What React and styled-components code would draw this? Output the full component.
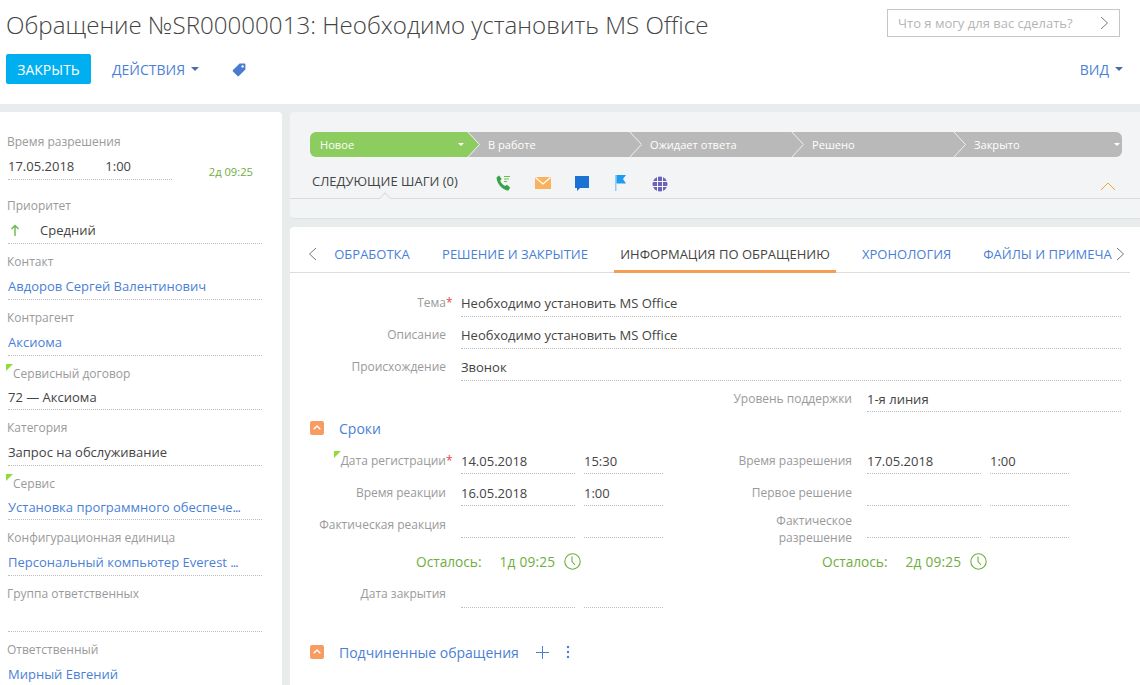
import React from "react";
import styled, { createGlobalStyle } from "styled-components";

const Global = createGlobalStyle`
  html, body { margin: 0; padding: 0; height: 685px; overflow: hidden; background: #e9eced; }
  body { font-family: "Open Sans", "Liberation Sans", sans-serif; font-size: 13px; color: #444; }
  * { box-sizing: border-box; }
`;

const blue = "#4b7fd6";
const dots = "1px dotted #bdbdbd";

const Page = styled.div`
  width: 1140px;
  height: 685px;
  overflow: hidden;
  display: flex;
  flex-direction: column;
`;

const Header = styled.header`
  height: 104px;
  flex: none;
  background: #fff;
  padding: 0 17px 0 6px;
  display: flex;
  flex-direction: column;
`;

const TopRow = styled.div`
  display: flex;
  justify-content: space-between;
  height: 54px;
`;

const Title = styled.h1`
  margin: 7px 0 0;
  font-size: 24.14px;
  line-height: 36px;
  font-weight: 300;
  color: #444;
  white-space: nowrap;
`;

const Ask = styled.div`
  width: 233px;
  height: 28px;
  margin: 9px 3px 0 0;
  border: 1px solid #c6c6c6;
  display: flex;
  align-items: center;
  justify-content: space-between;
  padding: 0 10px;
  font-size: 13px;
  color: #b5b5b5;
`;

const ActionRow = styled.div`
  display: flex;
  align-items: center;
  height: 30px;
`;

const PrimaryButton = styled.button`
  width: 85px;
  height: 30px;
  border: 0;
  border-radius: 2px;
  background: #00aff0;
  color: #fff;
  font: 14px "Open Sans", sans-serif;
`;

const MenuButton = styled.div`
  display: flex;
  align-items: center;
  gap: 6px;
  font-size: 14px;
  color: ${blue};
  margin-left: ${(p) => p.$left || 0}px;
`;

const Caret = styled.span`
  width: 0;
  height: 0;
  border-left: 4px solid transparent;
  border-right: 4px solid transparent;
  border-top: 4px solid #4a6da7;
`;

const TagIcon = styled.svg`
  margin: 1px 0 0 33px;
`;

const Spacer = styled.div`
  flex: 1;
`;

const Body = styled.div`
  flex: 1;
  min-height: 0;
  padding-top: 8px;
  display: flex;
  gap: 8px;
`;

const Side = styled.aside`
  width: 282px;
  flex: none;
  background: #fff;
  border-radius: 0 4px 0 0;
  padding: 20px 20px 0 8px;
`;

const SideField = styled.div`
  position: relative;
  height: ${(p) => p.$h || 56}px;
`;

const SideLabel = styled.div`
  font-size: 12px;
  line-height: 20px;
  margin-left: -1px;
  color: #9a9a9a;
  white-space: nowrap;
  padding-left: ${(p) => (p.$marked ? 6 : 0)}px;
`;

const SideValue = styled.div`
  width: ${(p) => (p.$w ? `${p.$w}px` : "auto")};
  height: ${(p) => (p.$marked ? 26 : 28)}px;
  padding-top: ${(p) => (p.$marked ? 2 : 3)}px;
  line-height: 22px;
  font-size: 13px;
  color: ${(p) => (p.$link ? blue : "#444")};
  border-bottom: ${dots};
  white-space: nowrap;
  overflow: hidden;
  display: flex;
  gap: ${(p) => p.$gap || 0}px;
`;

const Dots = styled.span`
  letter-spacing: -1px;
`;

const Corner = styled.span`
  position: absolute;
  left: ${(p) => p.$left || 0}px;
  top: ${(p) => p.$top || 0}px;
  width: 0;
  height: 0;
  border-top: 7px solid #8fdc3c;
  border-right: 7px solid transparent;
`;

const SideTime = styled.div`
  display: flex;
  align-items: flex-end;
  justify-content: space-between;
`;

const SideRemain = styled.span`
  font-size: 11.2px;
  color: #6eae3e;
  margin: 0 9px 0 0;
  transform: translateY(-1px);
`;

const Main = styled.main`
  flex: 1;
  min-width: 0;
  display: flex;
  flex-direction: column;
  gap: 8px;
`;

const StagePanel = styled.section`
  height: 107px;
  flex: none;
  background: #f3f4f6;
  border-bottom: 1px solid #dfe1e3;
  border-radius: 4px 0 0 4px;
  padding-top: 20px;
`;

const Stages = styled.div`
  display: flex;
  margin: 0 18px 0 20px;
  height: 25px;
  border-radius: 6px;
  overflow: hidden;
`;

const Stage = styled.div`
  position: relative;
  flex: none;
  width: ${(p) => p.$w}px;
  height: 25px;
  line-height: 25px;
  padding-left: ${(p) => p.$pad}px;
  background: ${(p) => (p.$active ? "#8dcc5f" : "#b9b9b9")};
  color: #fff;
  font-size: 11.1px;
  z-index: ${(p) => p.$z};
`;

const StageArrow = styled.svg`
  position: absolute;
  right: -14px;
  top: 0;
`;

const StageCaret = styled.span`
  position: absolute;
  right: 2px;
  top: 11px;
  width: 0;
  height: 0;
  border-left: 3px solid transparent;
  border-right: 3px solid transparent;
  border-top: 3px solid #fff;
`;

const NextRow = styled.div`
  position: relative;
  height: 42px;
  border-bottom: 1px solid #d9dbdd;
  display: flex;
  align-items: flex-start;
  padding: 14px 0 0 22px;
`;

const NextTitle = styled.div`
  width: 184px;
  font-size: 13px;
  line-height: 20px;
  color: #444;
`;

const NextIcon = styled.svg`
  flex: none;
  margin-top: ${(p) => p.$top}px;
  margin-left: ${(p) => p.$left}px;
`;

const Notch = styled.span`
  position: absolute;
  left: 91px;
  bottom: -4px;
  width: 8px;
  height: 8px;
  background: #f3f4f6;
  border-left: 1px solid #d9dbdd;
  border-top: 1px solid #d9dbdd;
  transform: rotate(45deg);
`;

const Collapse = styled.svg`
  position: absolute;
  right: 24px;
  top: 25px;
`;

const CardPanel = styled.section`
  flex: 1;
  min-height: 0;
  background: #fff;
  border-radius: 4px 0 0 0;
  overflow: hidden;
`;

const Tabs = styled.nav`
  margin-right: 10px;
  height: 46px;
  border-bottom: 1px solid #ddd;
  display: flex;
  align-items: flex-start;
  padding: 17px 0 0 18px;
`;

const TabArrow = styled.span`
  flex: none;
  margin: 3px 0 0 ${(p) => p.$left || 0}px;
`;

const Tab = styled.div`
  flex: none;
  width: ${(p) => p.$w}px;
  margin-left: ${(p) => p.$left}px;
  height: 29px;
  font-size: 13px;
  line-height: 20px;
  white-space: nowrap;
  text-align: center;
  color: ${(p) => (p.$active ? "#444" : blue)};
  border-bottom: ${(p) => (p.$active ? "3px solid #f79d52" : "0")};
`;

const Form = styled.div`
  padding: 12px 19px 0 21px;
`;

const Grid = styled.div`
  display: grid;
  grid-template-columns: 135px 675px;
`;

const RowLabel = styled.div`
  position: relative;
  height: ${(p) => p.$h || 32}px;
  font-size: 12px;
  line-height: ${(p) => p.$line || 18}px;
  color: #9a9a9a;
  text-align: right;
  white-space: nowrap;
  padding-top: ${(p) => p.$top || 9}px;
`;

const Star = styled.span`
  position: absolute;
  left: 100%;
  color: #e8483f;
`;

const Value = styled.div`
  margin-left: 15px;
  height: 32px;
  border-bottom: ${dots};
  font-size: 13px;
  line-height: 20px;
  padding-top: 8px;
  color: #444;
  white-space: nowrap;
`;

const Split = styled.div`
  display: grid;
  grid-template-columns: 135px 129px 88px 54px 135px 129px 88px;
`;

const Cell = styled.div`
  margin-left: ${(p) => p.$left}px;
  width: ${(p) => p.$w}px;
  height: ${(p) => p.$h || 32}px;
  border-bottom: ${dots};
  font-size: 13px;
  line-height: 20px;
  padding-top: ${(p) => p.$pad || 9}px;
  white-space: nowrap;
  color: #444;
`;

const GroupHead = styled.div`
  display: flex;
  align-items: center;
  height: 24px;
  margin-top: ${(p) => p.$top || 0}px;
  margin-bottom: ${(p) => p.$bottom || 0}px;
`;

const Toggle = styled.span`
  width: 14px;
  height: 14px;
  margin: -1px 0 0 -1px;
  border-radius: 2px;
  background: #f79d63;
  display: flex;
  align-items: center;
  justify-content: center;
`;

const GroupTitle = styled.div`
  margin-left: 15px;
  font-size: 14px;
  color: ${blue};
`;

const RemainRow = styled.div`
  height: 38px;
  padding-top: 8px;
  display: grid;
  grid-template-columns: 406px 1fr;
  align-items: center;
`;

const Remain = styled.div`
  display: flex;
  align-items: center;
  color: #6eae3e;
  font-size: 13.7px;
  padding-left: 105px;
`;

const RemainValue = styled.span`
  margin: 0 9px 0 18px;
  letter-spacing: 0.2px;
`;

const GroupIcons = styled.div`
  display: flex;
  align-items: center;
  gap: 17px;
  margin-left: 17px;
`;

const Chevron = ({ dir = "right", color = "#777" }) => (
  <svg width="9" height="14" viewBox="0 0 9 14" fill="none" stroke={color} strokeWidth="1">
    <path d={dir === "right" ? "M1 1l6.5 6L1 13" : "M8 1L1.5 7 8 13"} />
  </svg>
);

const ClockIcon = () => (
  <svg width="17" height="17" viewBox="0 0 17 17" fill="none" stroke="#6eae3e" strokeWidth="1.1">
    <circle cx="8.5" cy="8.5" r="7.7" />
    <path d="M8 3.5v5l3 3.5" />
  </svg>
);

const UpIcon = () => (
  <svg width="8" height="5" viewBox="0 0 8 5" fill="none" stroke="#fff" strokeWidth="1.3">
    <path d="M.7 4.3L4 1l3.3 3.3" />
  </svg>
);

const stages = [
  { name: "Новое", w: 156, pad: 10, active: true, color: "#8dcc5f" },
  { name: "В работе", w: 162, pad: 22, color: "#b9b9b9" },
  { name: "Ожидает ответа", w: 162, pad: 22, color: "#b9b9b9" },
  { name: "Решено", w: 162, pad: 22, color: "#b9b9b9" },
  { name: "Закрыто", w: 170, pad: 22, last: true, color: "#b9b9b9" },
];

const StageArrowShape = ({ color }) => (
  <StageArrow width="14" height="25" viewBox="0 0 14 25">
    <path d="M0 0h1l12.5 12.5L1 25H0z" fill={color} />
    <path d="M1 -1l12.5 13.5L1 26" fill="none" stroke="#f0f1f2" strokeWidth="1" />
  </StageArrow>
);

const sideFields = [
  { label: "Приоритет", value: "Средний", arrow: true },
  { label: "Контакт", value: "Авдоров Сергей Валентинович", link: true },
  { label: "Контрагент", value: "Аксиома", link: true },
  { label: "Сервисный договор", value: "72 — Аксиома", marked: true, h: 54 },
  { label: "Категория", value: "Запрос на обслуживание" },
  { label: "Сервис", value: "Установка программного обеспече", cut: true, link: true, marked: true, h: 54 },
  { label: "Конфигурационная единица", value: "Персональный компьютер Everest ", cut: true, link: true },
  { label: "Группа ответственных", value: "" },
  { label: "Ответственный", value: "Мирный Евгений", link: true },
];

export default function App() {
  return (
    <Page>
      <Global />
      <Header>
        <TopRow>
          <Title>Обращение №SR00000013: Необходимо установить MS Office</Title>
          <Ask>
            Что я могу для вас сделать?
            <Chevron />
          </Ask>
        </TopRow>
        <ActionRow>
          <PrimaryButton>ЗАКРЫТЬ</PrimaryButton>
          <MenuButton $left={21}>
            ДЕЙСТВИЯ <Caret />
          </MenuButton>
          <TagIcon width="14" height="14" viewBox="0 0 14 14">
            <path d="M7.6.6h5a.8.8 0 0 1 .8.8v5L6.9 13a1 1 0 0 1-1.4 0L1 8.5a1 1 0 0 1 0-1.4z" fill="#4a7bd0" />
            <circle cx="10.6" cy="3.4" r="1.2" fill="#fff" />
          </TagIcon>
          <Spacer />
          <MenuButton>
            ВИД <Caret />
          </MenuButton>
        </ActionRow>
      </Header>
      <Body>
        <Side>
          <SideField $h={64}>
            <SideLabel>Время разрешения</SideLabel>
            <SideTime>
              <SideValue $w={164} $gap={31}>
                <span>17.05.2018</span>
                <span>1:00</span>
              </SideValue>
              <SideRemain>2д 09:25</SideRemain>
            </SideTime>
          </SideField>
          {sideFields.map((f) => (
            <SideField key={f.label} $h={f.h}>
              {f.marked && <Corner $left={-2} />}
              <SideLabel $marked={f.marked}>{f.label}</SideLabel>
              <SideValue $link={f.link} $marked={f.marked} $gap={21}>
                {f.arrow && (
                  <svg width="11" height="22" viewBox="0 0 11 22" fill="none" stroke="#6eb64a" strokeWidth="1.4">
                    <path d="M7 17V7M3.5 10L7 6.5l3.5 3.500" />
                  </svg>
                )}
                <span>
                  {f.value}
                  {f.cut && <Dots>...</Dots>}
                </span>
              </SideValue>
            </SideField>
          ))}
        </Side>
        <Main>
          <StagePanel>
            <Stages>
              {stages.map((s, i) => (
                <Stage key={s.name} $w={s.w} $pad={s.pad} $active={s.active} $z={10 - i}>
                  {s.name}
                  {(s.active || s.last) && <StageCaret />}
                  {!s.last && <StageArrowShape color={s.color} />}
                </Stage>
              ))}
            </Stages>
            <NextRow>
              <NextTitle>СЛЕДУЮЩИЕ ШАГИ (0)</NextTitle>
              <NextIcon $top={4} $left={0} width="16" height="16" viewBox="0 0 16 16">
                <path d="M3.2.5 5.6 4 4.3 5.700c.7 2.300 2.500 4.200 4.800 5.200l1.600-1.200 3.400 2.700-1.300 2.500c-.4.500-1 .7-1.600.5C5.700 13.900 1.400 8.900.6 3.400.5 2.800.8 2.200 1.300 1.800z" fill="#37a24a" />
                <path d="M8 1.500h6M8 4h5M8 6.500h3" stroke="#6dbb4b" strokeWidth="1" fill="none" />
              </NextIcon>
              <NextIcon $top={6} $left={23} width="16" height="12" viewBox="0 0 16 12">
                <rect width="16" height="12" fill="#fbb25f" />
                <path d="M.5.5 8 7l7.500-6.500" fill="none" stroke="#fff" strokeWidth="1.2" />
              </NextIcon>
              <NextIcon $top={5} $left={24} width="14" height="15" viewBox="0 0 14 15">
                <path d="M0 0h14v12H5l-3 3v-3H0z" fill="#1a73d2" />
              </NextIcon>
              <NextIcon $top={4} $left={26} width="11" height="16" viewBox="0 0 11 16">
                <path d="M0 0h1.500v16H0z" fill="#8fcdf7" />
                <path d="M1.500 0H11L8 4l3 4.500H1.500z" fill="#1f9cf0" />
              </NextIcon>
              <NextIcon $top={5} $left={26} width="16" height="16" viewBox="0 0 16 16">
                <circle cx="8" cy="8" r="7.5" fill="#6a63b8" />
                <path d="M0 5.500h16M0 10.500h16M5.500 0v16M10.500 0v16" stroke="#f3f4f6" strokeWidth="1" />
              </NextIcon>
              <Notch />
              <Collapse width="16" height="9" viewBox="0 0 16 9" fill="none" stroke="#f5a623" strokeWidth="1">
                <path d="M1 8l7-7 7 7" />
              </Collapse>
            </NextRow>
          </StagePanel>
          <CardPanel>
            <Tabs>
              <TabArrow>
                <Chevron dir="left" />
              </TabArrow>
              <Tab $w={76} $left={17}>ОБРАБОТКА</Tab>
              <Tab $w={146} $left={32}>РЕШЕНИЕ И ЗАКРЫТИЕ</Tab>
              <Tab $w={222} $left={26} $active>ИНФОРМАЦИЯ ПО ОБРАЩЕНИЮ</Tab>
              <Tab $w={89} $left={26}>ХРОНОЛОГИЯ</Tab>
              <Tab $w={129} $left={32}>ФАЙЛЫ И ПРИМЕЧА</Tab>
              <TabArrow $left={4}>
                <Chevron />
              </TabArrow>
            </Tabs>
            <Form>
              <Grid>
                <RowLabel>Тема<Star>*</Star></RowLabel>
                <Value>Необходимо установить MS Office</Value>
                <RowLabel>Описание</RowLabel>
                <Value>Необходимо установить MS Office</Value>
                <RowLabel>Происхождение</RowLabel>
                <Value>Звонок</Value>
              </Grid>
              <Split>
                <div /><div /><div /><div />
                <RowLabel $h={31}>Уровень поддержки</RowLabel>
                <Cell $left={15} $w={254} $h={31} $pad={8}>1-я линия</Cell>
              </Split>
              <GroupHead $top={4} $bottom={2}>
                <Toggle><UpIcon /></Toggle>
                <GroupTitle>Сроки</GroupTitle>
              </GroupHead>
              <Split>
                <RowLabel $top={10}>
                  <Corner $left={23} $top={9} />
                  Дата регистрации<Star>*</Star>
                </RowLabel>
                <Cell $left={15} $w={114}>14.05.2018</Cell>
                <Cell $left={9} $w={79}>15:30</Cell>
                <div />
                <RowLabel $top={10}>Время разрешения</RowLabel>
                <Cell $left={15} $w={114}>17.05.2018</Cell>
                <Cell $left={9} $w={79}>1:00</Cell>

                <RowLabel $top={10}>Время реакции</RowLabel>
                <Cell $left={15} $w={114}>16.05.2018</Cell>
                <Cell $left={9} $w={79}>1:00</Cell>
                <div />
                <RowLabel $top={10}>Первое решение</RowLabel>
                <Cell $left={15} $w={114} />
                <Cell $left={9} $w={79} />

                <RowLabel $top={10}>Фактическая реакция</RowLabel>
                <Cell $left={15} $w={114} />
                <Cell $left={9} $w={79} />
                <div />
                <RowLabel $top={6} $line={17}>Фактическое<br />разрешение</RowLabel>
                <Cell $left={15} $w={114} />
                <Cell $left={9} $w={79} />
              </Split>
              <RemainRow>
                <Remain>
                  Осталось:
                  <RemainValue>1д 09:25</RemainValue>
                  <ClockIcon />
                </Remain>
                <Remain>
                  Осталось:
                  <RemainValue>2д 09:25</RemainValue>
                  <ClockIcon />
                </Remain>
              </RemainRow>
              <Split>
                <RowLabel>Дата закрытия</RowLabel>
                <Cell $left={15} $w={114} />
                <Cell $left={9} $w={79} />
              </Split>
              <GroupHead $top={32}>
                <Toggle><UpIcon /></Toggle>
                <GroupTitle>Подчиненные обращения</GroupTitle>
                <GroupIcons>
                  <svg width="13" height="13" viewBox="0 0 13 13" stroke="#4b7fd6" strokeWidth="1">
                    <path d="M6.5 0v13M0 6.500h13" />
                  </svg>
                  <svg width="4" height="14" viewBox="0 0 4 14" fill="#4b7fd6">
                    <circle cx="2" cy="2" r="1.2" />
                    <circle cx="2" cy="7" r="1.2" />
                    <circle cx="2" cy="12" r="1.2" />
                  </svg>
                </GroupIcons>
              </GroupHead>
            </Form>
          </CardPanel>
        </Main>
      </Body>
    </Page>
  );
}
